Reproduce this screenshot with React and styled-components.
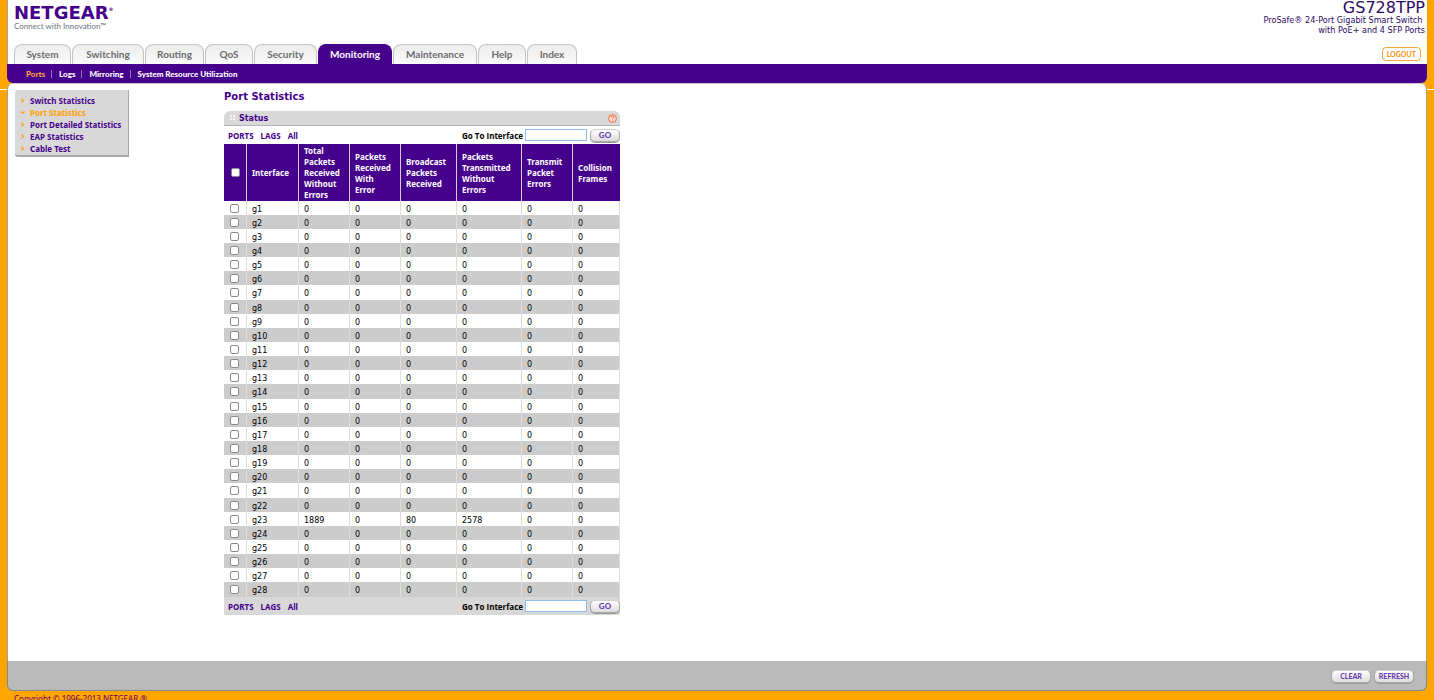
import React, { useState } from 'react';
import styled, { createGlobalStyle } from 'styled-components';

const GlobalStyle = createGlobalStyle`
  * {
    box-sizing: border-box;
  }
  body {
    margin: 0;
    background: linear-gradient(#fff, #fff) 0 89px / 100% 1px no-repeat, #ffa500;
    font-family: 'DejaVu Sans', Verdana, sans-serif;
    font-size: 8px;
    color: #000;
  }
  a {
    text-decoration: none;
  }
`;

const Page = styled.div`
  display: flex;
  flex-direction: column;
  height: 100vh;
  overflow: hidden;
  padding: 0 7px;
`;
const Header = styled.header`
  background: #fff;
  border-left: 1px solid #b5a27c;
`;
const Brand = styled.div`
  display: flex;
  justify-content: space-between;
  height: 44px;
  padding: 0 2px 0 6px;
`;
const Logo = styled.a`
  display: block;
  padding-top: 4px;
  color: #45008c;
  font-weight: bold;
  font-size: 18px;
  line-height: 18px;
`;
const LogoMark = styled.sup`
  font-size: 5px;
  line-height: 5px;
  vertical-align: 8px;
`;
const Tagline = styled.span`
  display: block;
  color: #6a7480;
  font-family: Lato, sans-serif;
  font-weight: normal;
  font-size: 8px;
  line-height: 8px;
`;
const Product = styled.div`
  color: #2c0a66;
  text-align: right;
`;
const Model = styled.div`
  font-size: 16px;
  line-height: 15px;
`;
const ModelInfo = styled.div`
  font-family: 'DejaVu Sans Condensed', 'DejaVu Sans', Tahoma, sans-serif;
  font-size: 9px;
  line-height: 10px;
`;
const TabRow = styled.div`
  display: flex;
  justify-content: space-between;
  padding: 0 6px;
`;
const Tabs = styled.nav`
  display: flex;
  gap: 1px;
`;
const Tab = styled.a`
  width: ${props => props.$width}px;
  height: 20px;
  border: 1px solid ${props => (props.$active ? '#45008c' : '#c4c4c4')};
  border-bottom: 0;
  border-radius: 8px 8px 0 0;
  background: ${props => (props.$active ? '#45008c' : 'linear-gradient(#ececec, #fafafa)')};
  color: ${props => (props.$active ? '#fff' : '#6b6b6b')};
  font-family: Lato, sans-serif;
  font-weight: bold;
  font-size: 10px;
  line-height: 19px;
  text-align: center;
`;
const Logout = styled.button`
  height: 14px;
  margin-top: 3px;
  padding: 0 4px;
  border: 1px solid #fba43a;
  border-radius: 4px;
  background: #fff;
  color: #fb9a23;
  font-family: Lato, sans-serif;
  font-weight: 900;
  font-size: 7px;
  line-height: 12px;
`;
const SubNav = styled.nav`
  display: flex;
  align-items: center;
  height: 19px;
  padding-left: 19px;
  border-radius: 0 0 6px 6px;
  background: #45008c;
`;
const SubLink = styled.a`
  padding-right: 6px;
  color: ${props => (props.$active ? '#fba43a' : '#fff')};
  font-family: Lato, sans-serif;
  font-weight: 900;
  font-size: 8px;
  line-height: 8px;

  & + & {
    padding-left: 7px;
    border-left: 1px solid #8f78b4;
  }
`;
const HeaderEnd = styled.div`
  background: #ffa500;
`;
const Main = styled.main`
  display: flex;
  flex: 1;
  align-items: flex-start;
  padding: 6px 7px;
  border-left: 1px solid #b5a27c;
  border-right: 1px solid #b5a27c;
  border-top: 1px solid #c9c9c9;
  border-radius: 6px 6px 0 0;
  background: #fff;
`;
const SideMenu = styled.nav`
  width: 114px;
  margin-right: 95px;
  padding: 4px 0 1px;
  border-right: 1px solid #a8a8a8;
  border-bottom: 2px solid #a8a8a8;
  border-radius: 3px 0 0 3px;
  background: #d8d8d8;
`;
const SideLink = styled.a`
  display: flex;
  align-items: center;
  height: 12px;
  padding-left: 5px;
  color: ${props => (props.$active ? '#ffa000' : '#45008c')};
  font-family: 'Noto Sans', Verdana, sans-serif;
  font-weight: bold;
  font-size: 8px;
  white-space: nowrap;
`;
const Arrow = styled.svg`
  flex-shrink: 0;
  width: 5px;
  height: 5px;
  margin-right: 5px;
  fill: none;
  stroke: #ff9d1a;
`;
const Content = styled.section`
  width: 396px;
  padding-top: 1px;
`;
const Title = styled.h1`
  margin: 0 0 8px;
  color: #45008c;
  font-size: 10px;
  line-height: 12px;
`;
const PanelHead = styled.div`
  display: flex;
  align-items: center;
  height: 15px;
  padding: 0 3px 0 6px;
  border-bottom: 1px solid #b4b4b4;
  border-radius: 6px 6px 0 0;
  background: #d8d8d8;
`;
const PanelTitle = styled.h2`
  flex: 1;
  margin: 0 0 0 3px;
  color: #45008c;
  font-size: 8px;
`;
const HelpButton = styled.button`
  display: flex;
  padding: 0;
  border: 0;
  background: none;
`;
const Bar = styled.form`
  display: flex;
  align-items: center;
  height: 18px;
  padding-left: 4px;
  background: ${props => (props.$shaded ? '#d8d8d8' : '#fff')};
`;
const Filters = styled.div`
  display: flex;
  flex: 1;
  gap: 7px;
`;
const Filter = styled.a`
  color: #45008c;
  font-family: 'Noto Sans', Verdana, sans-serif;
  font-weight: bold;
`;
const GoLabel = styled.label`
  font-family: 'Open Sans', Verdana, sans-serif;
  font-weight: bold;
`;
const GoInput = styled.input`
  width: 62px;
  height: 12px;
  margin: 0 3px 0 2px;
  padding: 0 2px;
  border: 1px solid #8fbcec;
  background: #fff;
  font-size: 8px;
`;
const PillButton = styled.button`
  width: ${props => props.$width}px;
  height: 13px;
  padding: 0;
  border: 1px solid #a9a9a9;
  border-top-color: #cfcfcf;
  border-radius: 5px;
  background: linear-gradient(#fff, #dcdcdc);
  box-shadow: 0 1px 0 #999;
  color: #6a3fb0;
  font-family: Lato, sans-serif;
  font-weight: 900;
  font-size: ${props => (props.$small ? 7 : 8)}px;
  line-height: 11px;
`;
const Table = styled.table`
  width: 100%;
  border-collapse: separate;
  border-spacing: 0;
  table-layout: fixed;
`;
const Th = styled.th`
  width: ${props => props.$width}px;
  height: 57px;
  padding: 0 5px;
  border-right: 1px solid #d0d0d0;
  background: #45008c;
  color: #fff;
  font-family: 'Noto Sans', Verdana, sans-serif;
  font-size: 8px;
  line-height: 11px;
  text-align: left;

  &:first-child {
    padding: 0 0 0 1px;
  }
  &:last-child {
    border-right: 0;
  }
`;
const Row = styled.tr`
  height: 14px;

  &:nth-child(even) {
    background: #ccc;
  }
  &:nth-child(7n) {
    height: 15px;
  }
`;
const Td = styled.td`
  padding: 3px 0 0 5px;
  border-right: 1px solid #ddd;
  line-height: 11px;
  vertical-align: top;

  &:first-child {
    padding: 3px 2px 0 0;
  }
`;
const Check = styled.input`
  display: block;
  appearance: none;
  width: 9px;
  height: 9px;
  margin: 0 auto;
  border: 1px solid #8a8a8a;
  border-radius: 2px;
  background: #fff;

  &:checked {
    background: #45008c;
  }
`;
const ActionBar = styled.div`
  display: flex;
  flex-shrink: 0;
  justify-content: flex-end;
  gap: 3px;
  height: 30px;
  padding: 9px 12px 0;
  border: 1px solid #888;
  border-top: 0;
  border-radius: 0 0 6px 6px;
  background: #b9b9b9;
`;
const Copyright = styled.footer`
  flex-shrink: 0;
  height: 9px;
  padding: 3px 7px 0;
  color: #6b0070;
  font-family: 'Noto Sans', Verdana, sans-serif;
  line-height: 10px;
`;

const tabs = [
  ['System', 57],
  ['Switching', 72],
  ['Routing', 59],
  ['QoS', 48],
  ['Security', 63],
  ['Monitoring', 74],
  ['Maintenance', 84],
  ['Help', 48],
  ['Index', 50],
];
const subLinks = ['Ports', 'Logs', 'Mirroring', 'System Resource Utilization'];
const sideLinks = [
  'Switch Statistics',
  'Port Statistics',
  'Port Detailed Statistics',
  'EAP Statistics',
  'Cable Test',
];
const columns = [
  ['Interface', 52],
  ['Total Packets Received Without Errors', 51],
  ['Packets Received With Error', 51],
  ['Broadcast Packets Received', 56],
  ['Packets Transmitted Without Errors', 65],
  ['Transmit Packet Errors', 51],
  ['Collision Frames', 47],
];
const counters = { g23: [1889, 0, 80, 2578, 0, 0] };
const ports = Array.from({ length: 28 }, (_, i) => `g${i + 1}`);

function InterfaceBar({ id, shaded }) {
  return (
    <Bar $shaded={shaded} onSubmit={e => e.preventDefault()}>
      <Filters>
        <Filter href="#ports">PORTS</Filter>
        <Filter href="#lags">LAGS</Filter>
        <Filter href="#all">All</Filter>
      </Filters>
      <GoLabel htmlFor={id}>Go To Interface</GoLabel>
      <GoInput id={id} type="text" />
      <PillButton type="submit" $width={30}>GO</PillButton>
    </Bar>
  );
}

function App() {
  const [selected, setSelected] = useState([]);

  const toggle = (port) => {
    setSelected(selected.includes(port) ? selected.filter(p => p !== port) : [...selected, port]);
  };
  const toggleAll = () => setSelected(selected.length === ports.length ? [] : ports);

  return (
    <Page>
      <GlobalStyle />
      <Header>
        <Brand>
          <Logo href="#home">
            NETGEAR<LogoMark>®</LogoMark>
            <Tagline>Connect with Innovation™</Tagline>
          </Logo>
          <Product>
            <Model>GS728TPP</Model>
            <ModelInfo>ProSafe® 24-Port Gigabit Smart Switch&nbsp;</ModelInfo>
            <ModelInfo>with PoE+ and 4 SFP Ports</ModelInfo>
          </Product>
        </Brand>
        <TabRow>
          <Tabs>
            {tabs.map(([name, width]) => (
              <Tab key={name} href={`#${name}`} $width={width} $active={name === 'Monitoring'}>
                {name}
              </Tab>
            ))}
          </Tabs>
          <Logout type="button">LOGOUT</Logout>
        </TabRow>
      </Header>
      <HeaderEnd>
        <SubNav>
          {subLinks.map(name => (
            <SubLink key={name} href={`#${name}`} $active={name === 'Ports'}>{name}</SubLink>
          ))}
        </SubNav>
      </HeaderEnd>

      <Main>
        <SideMenu>
          {sideLinks.map(name => {
            const active = name === 'Port Statistics';
            return (
              <SideLink key={name} href={`#${name}`} $active={active}>
                <Arrow viewBox="0 0 5 5" strokeWidth="1.2">
                  <path d={active ? 'M0.5 1.5 L2.5 3.5 L4.5 1.5' : 'M1.5 0.5 L3.5 2.5 L1.5 4.5'} />
                </Arrow>
                {name}
              </SideLink>
            );
          })}
        </SideMenu>

        <Content>
          <Title>Port Statistics</Title>
          <PanelHead>
            <svg width="6" height="6" viewBox="0 0 6 6" fill="#f4f4f4">
              <path d="M0 0h2v2H0zM3 0h2v2H3zM0 3h2v2H0zM3 3h2v2H3z" />
            </svg>
            <PanelTitle>Status</PanelTitle>
            <HelpButton type="button" aria-label="Help">
              <svg width="9" height="9" viewBox="0 0 9 9" fill="none" stroke="#f26a3d">
                <circle cx="4.5" cy="4.5" r="3.9" fill="#fbe3d8" />
                <path d="M3 3.6c0-2 3-2 3-.2 0 1-1.4 1-1.4 2M4.6 6.2v.9" />
              </svg>
            </HelpButton>
          </PanelHead>
          <InterfaceBar id="goto-top" />
          <Table>
            <thead>
              <tr>
                <Th $width={23}>
                  <Check
                    type="checkbox"
                    aria-label="Select all interfaces"
                    checked={selected.length === ports.length}
                    onChange={toggleAll}
                  />
                </Th>
                {columns.map(([name, width]) => <Th key={name} $width={width}>{name}</Th>)}
              </tr>
            </thead>
            <tbody>
              {ports.map(port => (
                <Row key={port}>
                  <Td>
                    <Check
                      type="checkbox"
                      aria-label={`Select ${port}`}
                      checked={selected.includes(port)}
                      onChange={() => toggle(port)}
                    />
                  </Td>
                  <Td>{port}</Td>
                  {(counters[port] || [0, 0, 0, 0, 0, 0]).map((value, i) => <Td key={i}>{value}</Td>)}
                </Row>
              ))}
            </tbody>
          </Table>
          <InterfaceBar id="goto-bottom" shaded />
        </Content>
      </Main>

      <ActionBar>
        <PillButton type="button" $width={40} $small>CLEAR</PillButton>
        <PillButton type="button" $width={40} $small>REFRESH</PillButton>
      </ActionBar>
      <Copyright>Copyright © 1996-2013 NETGEAR ®</Copyright>
    </Page>
  );
}

export default App;
